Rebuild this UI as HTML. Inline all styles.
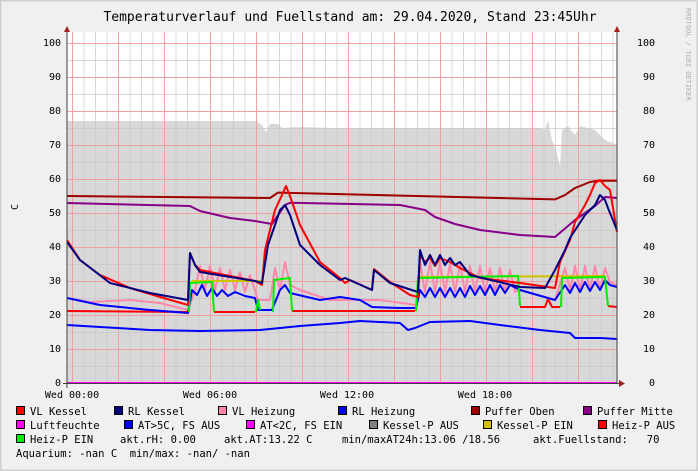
<!DOCTYPE html>
<html><head><meta charset="utf-8"><style>
html,body{margin:0;padding:0;background:#f0f0f0;}
svg{display:block;font-family:"DejaVu Sans Mono","Liberation Mono",monospace;}
</style></head><body>
<svg width="698" height="471" viewBox="0 0 698 471" xmlns="http://www.w3.org/2000/svg">
<defs>
<pattern id="vmin" x="72" y="0" width="11.5" height="10" patternUnits="userSpaceOnUse"><rect x="0" y="0" width="1" height="10" fill="#c8c8c8" opacity="0.7"/></pattern>
<pattern id="vmaj" x="72" y="0" width="46" height="10" patternUnits="userSpaceOnUse"><rect x="0" y="0" width="1" height="10" fill="#f0a0a0"/></pattern>
<pattern id="hmin" x="0" y="383" width="10" height="17" patternUnits="userSpaceOnUse"><rect x="0" y="0" width="10" height="1" fill="#c8c8c8" opacity="0.7"/></pattern>
<pattern id="hmaj" x="0" y="383" width="10" height="34" patternUnits="userSpaceOnUse"><rect x="0" y="0" width="10" height="1" fill="#f0a0a0"/></pattern>
</defs>
<rect x="0" y="0" width="698" height="471" fill="#f0f0f0"/>
<rect x="0.5" y="0.5" width="697" height="470" fill="none" stroke="#cfcfcf" stroke-width="2"/>
<text x="350" y="21" font-size="13" text-anchor="middle" fill="#000">Temperaturverlauf und Fuellstand am: 29.04.2020, Stand 23:45Uhr</text>
<text x="686" y="8" font-size="7" fill="#b0b0b0" transform="rotate(90 686 8)">RRDTOOL / TOBI OETIKER</text>
<rect x="67" y="32" width="550" height="351" fill="#fff"/>
<path d="M67,383 L67,121 L256,121 L262,125 L266,132 L270,124 L278,124 L282,128 L300,127 L330,128 L420,128 L540,128 L545,130 L548,120 L552,140 L556,150 L560,166 L562,130 L568,126 L575,135 L580,126 L595,130 L605,140 L617,145 L617,383 Z" fill="#d8d8d8"/>
<rect x="67" y="32" width="550" height="351" fill="url(#vmin)"/>
<rect x="67" y="32" width="550" height="351" fill="url(#hmin)"/>
<rect x="67" y="32" width="550" height="351" fill="url(#vmaj)"/>
<rect x="67" y="32" width="550" height="351" fill="url(#hmaj)"/>
<g fill="none" stroke-width="2" stroke-linejoin="round">
<polyline stroke="#0000ff" points="67,325 100,327 150,330 200,331 260,330 300,326 340,323 360,321 400,323 408,330 415,328 430,322 470,321 500,325 540,330 570,333 575,338 600,338 617,339"/>
<polyline stroke="#ff0000" points="67,311 188,312"/>
<polyline stroke="#ff0000" points="214,312 255,312"/>
<polyline stroke="#ff0000" points="292,311 415,311"/>
<polyline stroke="#ff0000" points="520,307 545,307 548,299 552,307 560,307"/>
<polyline stroke="#ff0000" points="608,306 617,307"/>
<polyline stroke="#ff88aa" points="67,298 90,302 130,300 160,303 188,310 195,290 200,266 205,290 210,266 215,290 220,268 225,290 230,270 235,290 240,272 245,292 250,275 258,300 270,300 275,268 280,290 285,262 290,285 300,290 330,300 380,300 416,305 420,262 425,292 430,262 435,292 440,262 445,292 450,264 455,292 460,264 465,292 470,266 475,292 480,266 485,292 490,268 495,292 500,268 505,292 510,270 515,292 520,290 555,300 565,268 570,290 575,266 580,290 585,266 590,290 595,266 600,290 605,268 610,282 617,285"/>
<polyline stroke="#0000ff" points="67,298 100,305 150,310 188,313 192,290 197,295 202,285 207,296 212,288 217,296 222,290 228,296 235,292 245,296 255,298 258,310 272,310 280,290 285,285 290,293 320,300 340,297 360,300 372,307 400,308 416,308 420,290 425,297 430,288 435,297 440,288 445,297 450,288 455,297 460,288 465,297 470,286 475,295 480,286 485,295 490,285 495,295 500,285 505,293 510,285 520,290 555,300 565,285 570,293 575,283 580,292 585,282 590,291 595,282 600,290 605,280 610,285 617,287"/>
<polyline stroke="#d0c000" points="192,281 262,281"/>
<polyline stroke="#d0c000" points="418,277 605,276"/>
<polyline stroke="#00ee00" points="189,312 190,283 212,282 214,312"/>
<polyline stroke="#00ee00" points="256,312 258,300 260,310"/>
<polyline stroke="#00ee00" points="273,312 274,280 290,278 292,311"/>
<polyline stroke="#00ee00" points="416,311 418,278 518,276 520,306"/>
<polyline stroke="#00ee00" points="561,307 562,278 605,277 608,306"/>
<polyline stroke="#a00000" points="67,196 270,198 278,192.6 555,199.4 565,195 575,188 590,182 598,180.7 617,180.7"/>
<polyline stroke="#880088" points="67,203 190,206 200,211 230,218 255,221 272,224 285,205 290,202.8 400,205 425,210 435,217 455,224 480,230 520,235 555,237 575,220 595,206 605,197 617,198"/>
<polyline stroke="#ff0000" points="67,240 80,260 100,275 130,288 160,297 188,305 190,253 195,265 200,270 230,276 255,281 262,285 265,250 275,210 282,195 286,186 290,196 300,225 320,262 340,278 345,283 350,280 372,290 374,269 390,282 410,295 418,297 420,255 425,262 430,258 435,266 440,258 450,262 460,268 480,278 520,283 555,288 560,262 570,240 575,222 585,205 590,195 595,183 600,180 605,186 610,190 617,232"/>
<polyline stroke="#000080" points="67,242 80,260 110,283 150,293 188,300 190,253 195,265 200,272 255,281 262,283 268,245 275,225 280,210 285,205 290,215 300,245 320,265 340,280 345,278 372,290 374,270 390,283 418,292 420,250 425,265 430,255 435,265 440,255 445,265 450,258 455,265 460,262 470,275 520,287 545,288 555,270 565,250 570,238 585,215 595,205 600,195 605,200 608,208 617,230"/>
</g>
<line x1="67" y1="383" x2="617" y2="383" stroke="#ff00ff" stroke-width="2"/>
<line x1="67" y1="388" x2="67" y2="30" stroke="#404040" stroke-width="1"/>
<line x1="63" y1="383.5" x2="620" y2="383.5" stroke="#404040" stroke-width="1"/>
<line x1="617" y1="383" x2="617" y2="30" stroke="#404040" stroke-width="1"/>
<polygon points="64,32 67,26 70,32" fill="#a02020"/>
<polygon points="614,32 617,26 620,32" fill="#a02020"/>
<polygon points="619,380 625,383.5 619,387" fill="#a02020"/>
<g font-size="10" fill="#000" text-anchor="end">
<text x="61" y="46">100</text><text x="61" y="80">90</text><text x="61" y="114">80</text><text x="61" y="148">70</text><text x="61" y="182">60</text><text x="61" y="216">50</text><text x="61" y="250">40</text><text x="61" y="284">30</text><text x="61" y="318">20</text><text x="61" y="352">10</text><text x="61" y="386">0</text>
<text x="655" y="46">100</text><text x="655" y="80">90</text><text x="655" y="114">80</text><text x="655" y="148">70</text><text x="655" y="182">60</text><text x="655" y="216">50</text><text x="655" y="250">40</text><text x="655" y="284">30</text><text x="655" y="318">20</text><text x="655" y="352">10</text><text x="655" y="386">0</text>
</g>
<text x="18" y="207" font-size="10" transform="rotate(-90 18 207)" text-anchor="middle">C</text>
<g font-size="10" fill="#000" text-anchor="middle">
<text x="72" y="398">Wed 00:00</text><text x="210" y="398">Wed 06:00</text><text x="347" y="398">Wed 12:00</text><text x="485" y="398">Wed 18:00</text>
</g>
<g font-size="10.5" fill="#000">
<g stroke="#000" stroke-width="1">
<rect x="16.5" y="406.5" width="8" height="8" fill="#ff0000"/>
<rect x="114.5" y="406.5" width="8" height="8" fill="#000080"/>
<rect x="218.5" y="406.5" width="8" height="8" fill="#ff88aa"/>
<rect x="338.5" y="406.5" width="8" height="8" fill="#0000ff"/>
<rect x="471.5" y="406.5" width="8" height="8" fill="#a00000"/>
<rect x="583.5" y="406.5" width="8" height="8" fill="#880088"/>
<rect x="16.5" y="420.5" width="8" height="8" fill="#ff00ff"/>
<rect x="124.5" y="420.5" width="8" height="8" fill="#0000ff"/>
<rect x="246.5" y="420.5" width="8" height="8" fill="#ff00ff"/>
<rect x="369.5" y="420.5" width="8" height="8" fill="#808080"/>
<rect x="483.5" y="420.5" width="8" height="8" fill="#d0c000"/>
<rect x="598.5" y="420.5" width="8" height="8" fill="#ff0000"/>
<rect x="16.5" y="434.5" width="8" height="8" fill="#00ee00"/>
</g>
<text x="30" y="415">VL Kessel</text>
<text x="128" y="415">RL Kessel</text>
<text x="232" y="415">VL Heizung</text>
<text x="352" y="415">RL Heizung</text>
<text x="485" y="415">Puffer Oben</text>
<text x="597" y="415">Puffer Mitte</text>
<text x="30" y="429">Luftfeuchte</text>
<text x="138" y="429">AT&gt;5C, FS AUS</text>
<text x="260" y="429">AT&lt;2C, FS EIN</text>
<text x="383" y="429">Kessel-P AUS</text>
<text x="497" y="429">Kessel-P EIN</text>
<text x="612" y="429">Heiz-P AUS</text>
<text x="30" y="443">Heiz-P EIN</text>
<text x="120" y="443">akt.rH: 0.00</text>
<text x="224" y="443">akt.AT:13.22 C</text>
<text x="342" y="443">min/maxAT24h:13.06 /18.56</text>
<text x="533" y="443" xml:space="preserve">akt.Fuellstand:   70</text>
<text x="16" y="457" xml:space="preserve">Aquarium: -nan C  min/max: -nan/ -nan</text>
</g>
</svg>
</body></html>
